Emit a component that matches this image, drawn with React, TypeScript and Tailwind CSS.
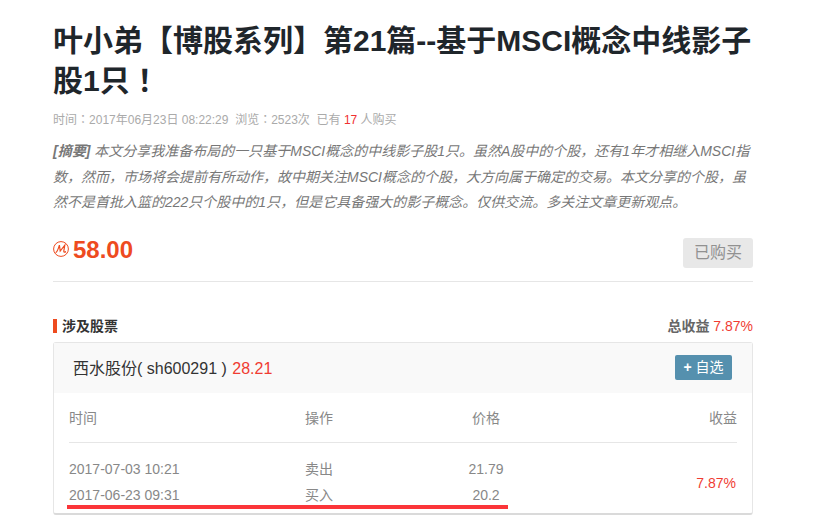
const fontStack = "font-['Liberation_Sans','Noto_Sans_CJK_SC',sans-serif]";

const trades = [
  { time: "2017-07-03 10:21", action: "卖出", price: "21.79" },
  { time: "2017-06-23 09:31", action: "买入", price: "20.2" },
];

// the reference centres ：！ in their cell, which the TC cut of Noto does
function Punct({ text }: { text: string }) {
  return (
    <>
      {text.split(/([：！])/).map((part, i) =>
        i % 2 === 1 ? (
          <span key={i} className="font-['Noto_Sans_CJK_TC',sans-serif] leading-[0]">
            {part}
          </span>
        ) : (
          part
        ),
      )}
    </>
  );
}

function CoinIcon() {
  return (
    <svg width="16" height="16" viewBox="0 0 16 16" fill="none" className="mr-[4px] mt-[4px] text-[#ee4b1f]">
      <circle cx="8" cy="8" r="7.4" stroke="currentColor" strokeWidth="1" />
      <path d="M2.6 11.6 C4.4 11.2 5.6 7 6.4 4.2 L7.2 10 L11.8 4.2 L10.8 10.2 C10.7 11.2 11.4 11.4 13 10.6" stroke="currentColor" strokeWidth="1.2" />
    </svg>
  );
}

export default function App() {
  return (
    <div className={`${fontStack} h-[519px] w-[829px] overflow-hidden bg-white`}>
      <div className="ml-[53px] w-[700px] pt-[21px]">
        <h1 className="text-[30px] font-bold leading-[40px] text-[#1f262b]">
          <Punct text="叶小弟【博股系列】第21篇--基于MSCI概念中线影子股1只！" />
        </h1>
        <div className="mt-[9px] text-[12px] leading-[20px] text-[#aaa]">
          <Punct text="时间：2017年06月23日 08:22:29" />&nbsp; <Punct text="浏览：2523次" />&nbsp; 已有 <span className="text-[#f03030]">17</span> 人购买
        </div>
        <p className="mt-[9px] text-[14px] italic leading-[25.5px] text-[#777]">
          <b className="font-bold">[摘要]</b> 本文分享我准备布局的一只基于MSCI概念的中线影子股1只。虽然A股中的个股，还有1年才相继入MSCI指数，然而，市场将会提前有所动作，故中期关注MSCI概念的个股，大方向属于确定的交易。本文分享的个股，虽然不是首批入篮的222只个股中的1只，但是它具备强大的影子概念。仅供交流。多关注文章更新观点。
        </p>
        <div className="mt-[21px] flex items-start justify-between border-b border-[#e6e6e6] pb-[13px]">
          <div className="flex items-start">
            <CoinIcon />
            <span className="text-[24px] font-bold leading-[26px] text-[#ee4b1f]">58.00</span>
          </div>
          <button className="mt-[1px] h-[30px] w-[70px] rounded-[3px] bg-[#e8e8e8] text-[16px] text-[#919191]">已购买</button>
        </div>
        <div className="mt-[36px] flex items-center justify-between">
          <div className="flex items-center">
            <span className="mr-[5px] h-[14px] w-[4px] bg-[#ee4b1f]" />
            <span className="text-[14px] font-bold leading-[16px] text-[#333]">涉及股票</span>
          </div>
          <div className="text-[14px] leading-[16px]">
            <b className="font-bold text-[#666]">总收益</b> <span className="text-[#f03c32]">7.87%</span>
          </div>
        </div>
        <div className="relative mt-[8px] h-[173px] rounded-[3px] border border-b-2 border-[#e6e6e6] border-b-[#dadada]">
          <div className="flex h-[50px] items-center justify-between bg-[#f9f9f9] pl-[19px] pr-[20px]">
            <div className="pt-[2px] text-[16px] text-[#333]">
              西水股份( sh600291 ) <span className="ml-[1px] text-[#f03c32]">28.21</span>
            </div>
            <button className="flex h-[25px] w-[57px] items-center justify-center rounded-[2px] bg-[#5590ae] text-[14px] text-white">
              <b className="mr-[4px] font-bold">+</b>自选
            </button>
          </div>
          <div className="px-[15px]">
            <div className="flex h-[50px] items-center border-b border-[#e6e6e6] pt-[2px] text-[14px] text-[#888]">
              <span className="w-[236px]">时间</span>
              <span className="w-[131px]">操作</span>
              <span className="w-[100px] text-center">价格</span>
              <span className="flex-1 text-right">收益</span>
            </div>
            <div className="flex pt-[14px] text-[14px] text-[#888]">
              <div className="w-[467px]">
                {trades.map((t) => (
                  <div key={t.time} className="flex h-[26px] items-center">
                    <span className="w-[236px]">{t.time}</span>
                    <span className="w-[131px]">{t.action}</span>
                    <span className="w-[100px] text-center">{t.price}</span>
                  </div>
                ))}
              </div>
              <div className="flex flex-1 items-center justify-end pr-[1px] pt-[1px] text-[#f03c32]">7.87%</div>
            </div>
          </div>
          <div className="absolute left-[13px] top-[162px] h-[4px] w-[441px] bg-[#fb3539]" />
        </div>
      </div>
    </div>
  );
}
